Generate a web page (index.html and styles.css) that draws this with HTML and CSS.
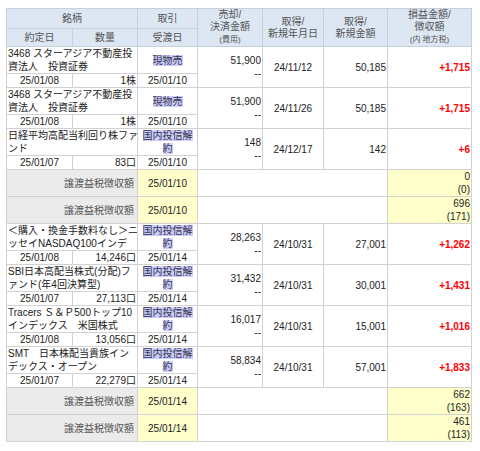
FILE: index.html
```html
<!DOCTYPE html>
<html>
<head>
    <title>約定履歴</title>
    <link rel="stylesheet" href="styles.css">
</head>
<body>
    <table class="trade-table">
        <colgroup>
            <col class="c-date">
            <col class="c-qty">
            <col class="c-kind">
            <col class="c-sell">
            <col class="c-gdate">
            <col class="c-gamt">
            <col class="c-pl">
        </colgroup>
        <thead>
            <tr class="head-top">
                <th colspan="2">銘柄</th>
                <th>取引</th>
                <th rowspan="2" class="th-multi">売却/<br>決済金額<br><span class="small">(費用)</span></th>
                <th rowspan="2" class="th-multi">取得/<br>新規年月日</th>
                <th rowspan="2" class="th-multi">取得/<br>新規金額</th>
                <th rowspan="2" class="th-multi">損益金額/<br>徴収額<br><span class="small">(内 地方税)</span></th>
            </tr>
            <tr class="head-sub">
                <th>約定日</th>
                <th>数量</th>
                <th>受渡日</th>
            </tr>
        </thead>
        <tbody>
            <tr class="name-row">
                <td colspan="2" class="name">3468 スターアジア不動産投<br>資法人　投資証券</td>
                <td class="kind"><span class="mark">現物売</span></td>
                <td rowspan="2" class="num">51,900<br>--</td>
                <td rowspan="2" class="center">24/11/12</td>
                <td rowspan="2" class="num">50,185</td>
                <td rowspan="2" class="num plus">+1,715</td>
            </tr>
            <tr class="date-row">
                <td class="center">25/01/08</td>
                <td class="num">1株</td>
                <td class="center">25/01/10</td>
            </tr>

            <tr class="name-row">
                <td colspan="2" class="name">3468 スターアジア不動産投<br>資法人　投資証券</td>
                <td class="kind"><span class="mark">現物売</span></td>
                <td rowspan="2" class="num">51,900<br>--</td>
                <td rowspan="2" class="center">24/11/26</td>
                <td rowspan="2" class="num">50,185</td>
                <td rowspan="2" class="num plus">+1,715</td>
            </tr>
            <tr class="date-row">
                <td class="center">25/01/08</td>
                <td class="num">1株</td>
                <td class="center">25/01/10</td>
            </tr>

            <tr class="name-row">
                <td colspan="2" class="name">日経平均高配当利回り株ファ<br>ンド</td>
                <td class="kind"><span class="mark">国内投信解</span><br><span class="mark">約</span></td>
                <td rowspan="2" class="num">148<br>--</td>
                <td rowspan="2" class="center">24/12/17</td>
                <td rowspan="2" class="num">142</td>
                <td rowspan="2" class="num plus">+6</td>
            </tr>
            <tr class="date-row">
                <td class="center">25/01/07</td>
                <td class="num">83口</td>
                <td class="center">25/01/10</td>
            </tr>

            <tr class="tax-row">
                <td colspan="2" class="tax-label">譲渡益税徴収額</td>
                <td class="tax-date">25/01/10</td>
                <td colspan="3"></td>
                <td class="tax-amt">0<br>(0)</td>
            </tr>
            <tr class="tax-row">
                <td colspan="2" class="tax-label">譲渡益税徴収額</td>
                <td class="tax-date">25/01/10</td>
                <td colspan="3"></td>
                <td class="tax-amt">696<br>(171)</td>
            </tr>

            <tr class="name-row">
                <td colspan="2" class="name">＜購入・換金手数料なし＞ニ<br>ッセイNASDAQ100インデ</td>
                <td class="kind"><span class="mark">国内投信解</span><br><span class="mark">約</span></td>
                <td rowspan="2" class="num">28,263<br>--</td>
                <td rowspan="2" class="center">24/10/31</td>
                <td rowspan="2" class="num">27,001</td>
                <td rowspan="2" class="num plus">+1,262</td>
            </tr>
            <tr class="date-row">
                <td class="center">25/01/08</td>
                <td class="num">14,246口</td>
                <td class="center">25/01/14</td>
            </tr>

            <tr class="name-row">
                <td colspan="2" class="name">SBI日本高配当株式(分配)フ<br>ァンド(年4回決算型)</td>
                <td class="kind"><span class="mark">国内投信解</span><br><span class="mark">約</span></td>
                <td rowspan="2" class="num">31,432<br>--</td>
                <td rowspan="2" class="center">24/10/31</td>
                <td rowspan="2" class="num">30,001</td>
                <td rowspan="2" class="num plus">+1,431</td>
            </tr>
            <tr class="date-row">
                <td class="center">25/01/07</td>
                <td class="num">27,113口</td>
                <td class="center">25/01/14</td>
            </tr>

            <tr class="name-row">
                <td colspan="2" class="name">Tracers Ｓ＆Ｐ500トップ10<br>インデックス　米国株式</td>
                <td class="kind"><span class="mark">国内投信解</span><br><span class="mark">約</span></td>
                <td rowspan="2" class="num">16,017<br>--</td>
                <td rowspan="2" class="center">24/10/31</td>
                <td rowspan="2" class="num">15,001</td>
                <td rowspan="2" class="num plus">+1,016</td>
            </tr>
            <tr class="date-row">
                <td class="center">25/01/08</td>
                <td class="num">13,056口</td>
                <td class="center">25/01/14</td>
            </tr>

            <tr class="name-row">
                <td colspan="2" class="name">SMT　日本株配当貴族イン<br>デックス・オープン</td>
                <td class="kind"><span class="mark">国内投信解</span><br><span class="mark">約</span></td>
                <td rowspan="2" class="num">58,834<br>--</td>
                <td rowspan="2" class="center">24/10/31</td>
                <td rowspan="2" class="num">57,001</td>
                <td rowspan="2" class="num plus">+1,833</td>
            </tr>
            <tr class="date-row">
                <td class="center">25/01/07</td>
                <td class="num">22,279口</td>
                <td class="center">25/01/14</td>
            </tr>

            <tr class="tax-row">
                <td colspan="2" class="tax-label">譲渡益税徴収額</td>
                <td class="tax-date">25/01/14</td>
                <td colspan="3"></td>
                <td class="tax-amt">662<br>(163)</td>
            </tr>
            <tr class="tax-row">
                <td colspan="2" class="tax-label">譲渡益税徴収額</td>
                <td class="tax-date">25/01/14</td>
                <td colspan="3"></td>
                <td class="tax-amt">461<br>(113)</td>
            </tr>
        </tbody>
    </table>
</body>
</html>
```

FILE: styles.css
```css
body {
    margin: 8px 0 0 6px;
    background: #fff;
    font-family: "Liberation Sans", "Noto Sans CJK JP", sans-serif;
    font-size: 10px;
    color: #222;
}

.trade-table {
    border-collapse: collapse;
    table-layout: fixed;
    width: 466px;
}

.c-date { width: 66px; }
.c-qty { width: 65px; }
.c-kind { width: 60px; }
.c-sell { width: 65px; }
.c-gdate { width: 61px; }
.c-gamt { width: 64px; }
.c-pl { width: 84px; }

th,
td {
    border: 1px solid #d2d2d2;
    padding: 0 1px;
    line-height: 13px;
    white-space: nowrap;
    overflow: hidden;
}

th {
    background: #dce7f3;
    color: #555;
    font-weight: normal;
    text-align: center;
    border-color: #c6d0dc;
}

.head-top th {
    height: 18px;
}

.head-sub th {
    height: 16px;
}

.th-multi {
    line-height: 12px;
}

.small {
    font-size: 8px;
}

.name-row td {
    height: 26px;
}

.date-row td {
    height: 13px;
}

.name {
    vertical-align: top;
    text-align: left;
    padding-left: 1px;
}

.kind {
    text-align: center;
    vertical-align: middle;
}

.mark {
    background: #ccccff;
    color: #334;
}

.num {
    text-align: right;
    vertical-align: middle;
}

.center {
    text-align: center;
    vertical-align: middle;
}

.plus {
    color: #ff0000;
    font-weight: bold;
}

.tax-row td {
    height: 25px;
}

.tax-label {
    background: #ebebeb;
    text-align: right;
    padding-right: 3px;
    color: #555;
}

.tax-date {
    background: #ffffcc;
    text-align: center;
}

.tax-amt {
    background: #ffffcc;
    text-align: right;
    vertical-align: middle;
}
```
